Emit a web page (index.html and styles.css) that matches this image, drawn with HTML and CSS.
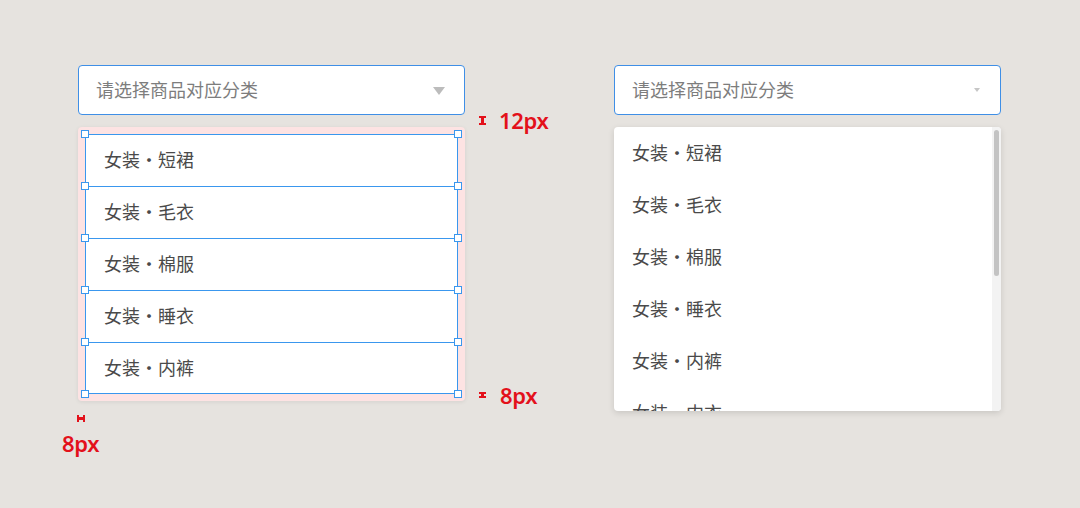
FILE: index.html
```html
<!DOCTYPE html>
<html lang="zh">
<head>
<meta charset="utf-8">
<link rel="stylesheet" href="styles.css">
</head>
<body>
<div class="stage">
  <div class="col col-left">
    <div class="select">
      <span class="placeholder">请选择商品对应分类</span>
      <span class="arrow arrow-big"></span>
    </div>
    <div class="pink">
      <div class="rows">
        <div class="row"><span class="h tl"></span><span class="h tr"></span>女装・短裙</div>
        <div class="row"><span class="h tl"></span><span class="h tr"></span>女装・毛衣</div>
        <div class="row"><span class="h tl"></span><span class="h tr"></span>女装・棉服</div>
        <div class="row"><span class="h tl"></span><span class="h tr"></span>女装・睡衣</div>
        <div class="row last"><span class="h tl"></span><span class="h tr"></span><span class="h bl"></span><span class="h br"></span>女装・内裤</div>
      </div>
    </div>
    <div class="note note-12"><span class="ibeam ib12"></span><span class="ntext">12px</span></div>
    <div class="note note-8r"><span class="ibeam ib8"></span><span class="ntext">8px</span></div>
    <div class="note note-8b"><span class="hbeam"></span><span class="ntext">8px</span></div>
  </div>
  <div class="col col-right">
    <div class="select">
      <span class="placeholder">请选择商品对应分类</span>
      <span class="arrow arrow-small"></span>
    </div>
    <div class="menu">
      <div class="menu-list">
        <div class="mitem">女装・短裙</div>
        <div class="mitem">女装・毛衣</div>
        <div class="mitem">女装・棉服</div>
        <div class="mitem">女装・睡衣</div>
        <div class="mitem">女装・内裤</div>
        <div class="mitem">女装・内衣</div>
      </div>
      <div class="scrollbar"><div class="thumb"></div></div>
    </div>
  </div>
</div>
</body>
</html>
```

FILE: styles.css
```css
html, body {
  margin: 0;
  padding: 0;
}
body {
  background: #e6e3df;
  width: 1080px;
  height: 508px;
  overflow: hidden;
  font-family: "Noto Sans CJK SC", "Noto Sans", sans-serif;
}
.stage {
  display: flex;
  gap: 149px;
  padding: 65px 0 0 78px;
}
.col {
  width: 387px;
  display: flex;
  flex-direction: column;
  gap: 12px;
}
.col-left {
  position: relative;
}
.select {
  box-sizing: border-box;
  height: 50px;
  background: #fff;
  border: 1px solid #3f8fe6;
  border-radius: 4px;
  display: flex;
  align-items: center;
  justify-content: space-between;
  padding: 0 19px 2px 17px;
}
.placeholder {
  font-size: 18px;
  color: #7d7d7d;
  line-height: 1;
}
.arrow {
  width: 0;
  height: 0;
  border-style: solid;
  border-color: #bcbcbc transparent transparent transparent;
}
.arrow-big {
  border-width: 8px 6px 0 6px;
  margin-top: 4px;
}
.arrow-small {
  border-width: 4px 3.5px 0 3.5px;
  border-top-color: #c6c6c6;
  margin-right: 1px;
  margin-top: 2px;
}
.pink {
  background: #fde3e3;
  border-radius: 4px;
  padding: 7px;
  box-shadow: 0 1px 4px rgba(0,0,0,0.08);
}
.rows {
  background: #fff;
}
.row {
  position: relative;
  box-sizing: border-box;
  height: 52px;
  border: 1px solid #3a97ee;
  border-bottom: none;
  display: flex;
  align-items: center;
  padding: 0 0 3px 18px;
  font-size: 18px;
  color: #4a4a4a;
}
.row.last {
  border-bottom: 1px solid #3a97ee;
}
.h {
  position: absolute;
  width: 6px;
  height: 6px;
  background: #fff;
  border: 1px solid #3a97ee;
}
.h.tl { left: -5px; top: -5px; }
.h.tr { right: -5px; top: -5px; }
.h.bl { left: -5px; bottom: -5px; }
.h.br { right: -5px; bottom: -5px; }

.note {
  position: absolute;
  display: flex;
  align-items: center;
  color: #e3111b;
}
.ntext {
  font-family: "Noto Sans", sans-serif;
  font-weight: 600;
  font-size: 22px;
  line-height: 1;
  letter-spacing: -0.3px;
}
.note-12 { left: 401px; top: 44px; gap: 13px; }
.note-8r { left: 401px; top: 319px; gap: 14px; }
.note-8b { left: -16px; top: 350px; flex-direction: column; align-items: flex-start; gap: 10px; }

.ibeam {
  box-sizing: border-box;
  width: 7px;
  border-top: 2px solid #e3111b;
  border-bottom: 2px solid #e3111b;
  background: linear-gradient(#e3111b, #e3111b) center / 3px 100% no-repeat;
}
.ib12 { height: 9px; }
.ib8 { height: 6px; }
.hbeam {
  box-sizing: border-box;
  width: 8px;
  height: 7px;
  margin-left: 15px;
  border-left: 2px solid #e3111b;
  border-right: 2px solid #e3111b;
  background: linear-gradient(#e3111b, #e3111b) center / 100% 3px no-repeat;
}

.menu {
  position: relative;
  height: 284px;
  background: #fff;
  border-radius: 4px;
  box-shadow: 0 2px 6px rgba(0,0,0,0.13);
  overflow: hidden;
  display: flex;
}
.menu-list {
  flex: 1;
}
.mitem {
  height: 52px;
  display: flex;
  align-items: center;
  padding: 0 0 3px 18px;
  box-sizing: border-box;
  font-size: 18px;
  color: #4a4a4a;
}
.scrollbar {
  width: 9px;
  background: #f3f3f3;
  padding: 3px 2px 0 2px;
  box-sizing: border-box;
}
.thumb {
  width: 5px;
  height: 146px;
  background: #c3c3c3;
  border-radius: 3px;
}
```
